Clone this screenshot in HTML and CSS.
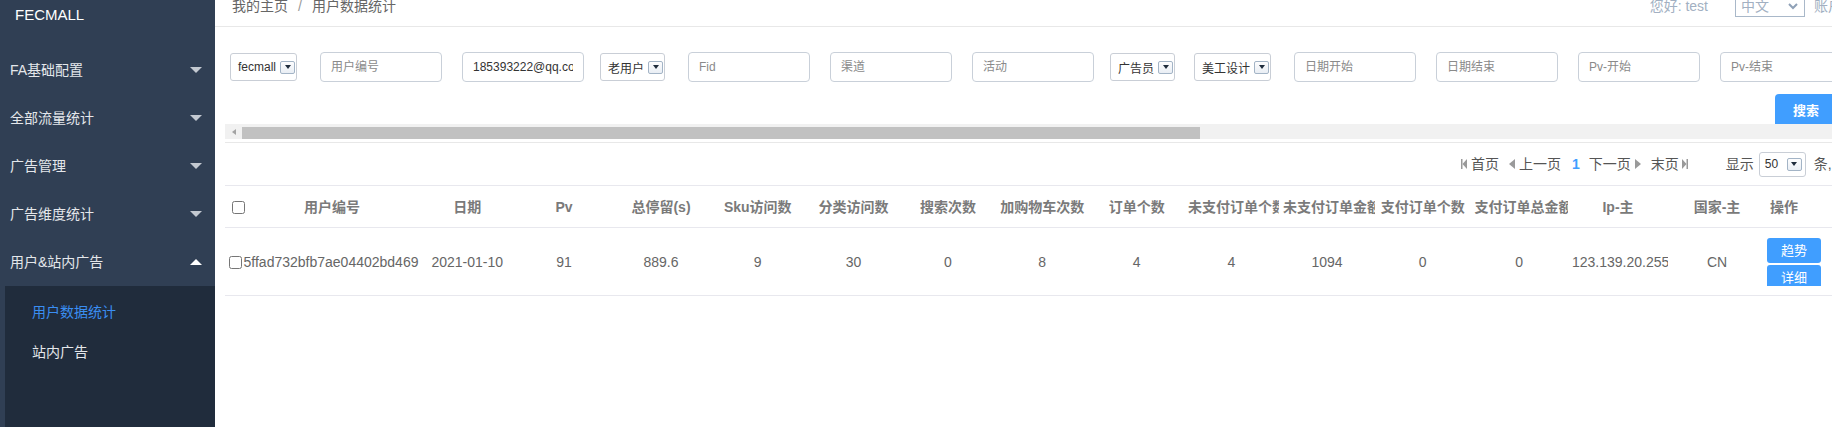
FILE: index.html
```html
<!DOCTYPE html>
<html lang="zh-CN">
<head>
<meta charset="utf-8">
<title>用户数据统计 - FECMALL</title>
<link rel="stylesheet" href="styles.css">
</head>
<body>
<div class="app">
  <aside class="sidebar">
    <div class="logo">FECMALL</div>
    <ul class="menu">
      <li class="menu-item"><span>FA基础配置</span><i class="caret"></i></li>
      <li class="menu-item"><span>全部流量统计</span><i class="caret"></i></li>
      <li class="menu-item"><span>广告管理</span><i class="caret"></i></li>
      <li class="menu-item"><span>广告维度统计</span><i class="caret"></i></li>
      <li class="menu-item"><span>用户&amp;站内广告</span><i class="caret caret-up"></i></li>
    </ul>
    <ul class="submenu">
      <li class="sub-item active">用户数据统计</li>
      <li class="sub-item">站内广告</li>
    </ul>
  </aside>

  <main class="main">
    <header class="topbar">
      <div class="crumbs">
        <span>我的主页</span><span class="crumb-sep">/</span><span>用户数据统计</span>
      </div>
      <div class="top-right">
        <span class="hello">您好: test</span>
        <div class="lang">
          <span>中文</span>
          <svg class="lang-chev" width="10" height="7" viewBox="0 0 10 7"><polyline points="1,1 5,5 9,1" fill="none" stroke="#8fa1b7" stroke-width="2"/></svg>
        </div>
        <span class="account">账户设置</span>
      </div>
    </header>

    <section class="filter">
      <div class="filter-row">
        <div class="sel"><span>fecmall</span><span class="sel-btn"></span></div>
        <input class="field" placeholder="用户编号">
        <input class="field" value="185393222@qq.com">
        <div class="sel"><span>老用户</span><span class="sel-btn"></span></div>
        <input class="field" placeholder="Fid">
        <input class="field" placeholder="渠道">
        <input class="field" placeholder="活动">
        <div class="sel"><span>广告员</span><span class="sel-btn"></span></div>
        <div class="sel"><span>美工设计</span><span class="sel-btn"></span></div>
        <input class="field" placeholder="日期开始">
        <input class="field" placeholder="日期结束">
        <input class="field" placeholder="Pv-开始">
        <input class="field" placeholder="Pv-结束">
      </div>
      <div class="search-row">
        <button class="btn-search">搜索</button>
      </div>
      <div class="hscroll">
        <span class="hscroll-arrow"></span>
        <span class="hscroll-thumb"></span>
      </div>
    </section>

    <div class="pager">
      <span class="pg">
        <svg width="6" height="10" viewBox="0 0 6 10"><rect x="0" y="0" width="1.5" height="10" fill="#9a9a9a"/><path d="M6 0 L1.5 5 L6 10 Z" fill="#9a9a9a"/></svg>
        <span>首页</span>
      </span>
      <span class="pg">
        <svg width="6" height="10" viewBox="0 0 6 10"><path d="M6 0 L0 5 L6 10 Z" fill="#9a9a9a"/></svg>
        <span>上一页</span>
      </span>
      <span class="pg-cur">1</span>
      <span class="pg">
        <span>下一页</span>
        <svg width="6" height="10" viewBox="0 0 6 10"><path d="M0 0 L6 5 L0 10 Z" fill="#9a9a9a"/></svg>
      </span>
      <span class="pg pg-last">
        <span>末页</span>
        <svg width="6" height="10" viewBox="0 0 6 10"><path d="M0 0 L4.5 5 L0 10 Z" fill="#9a9a9a"/><rect x="4.5" y="0" width="1.5" height="10" fill="#9a9a9a"/></svg>
      </span>
      <span class="pg-size">显示</span>
      <div class="sel sel-page"><span>50</span><span class="sel-btn"></span></div>
      <span class="pg-unit">条, 共1条</span>
    </div>

    <div class="table-wrap">
      <table class="grid">
        <colgroup>
          <col class="c-check">
          <col class="c-id">
          <col class="w965"><col class="w97"><col class="w97"><col class="w965">
          <col class="w95"><col class="w94"><col class="w945"><col class="w945">
          <col class="w95"><col class="w96"><col class="w955"><col class="w975">
          <col class="c-ip">
          <col class="c-country">
          <col class="c-ops">
        </colgroup>
        <thead>
          <tr>
            <th class="cell-check"><input type="checkbox" class="chk-head"></th>
            <th class="th-id">用户编号</th>
            <th>日期</th>
            <th>Pv</th>
            <th>总停留(s)</th>
            <th>Sku访问数</th>
            <th>分类访问数</th>
            <th>搜索次数</th>
            <th>加购物车次数</th>
            <th>订单个数</th>
            <th>未支付订单个数</th>
            <th>未支付订单金额</th>
            <th>支付订单个数</th>
            <th>支付订单总金额</th>
            <th>Ip-主</th>
            <th>国家-主</th>
            <th class="th-ops">操作</th>
          </tr>
        </thead>
        <tbody>
          <tr>
            <td class="cell-check"><input type="checkbox" class="chk-row"></td>
            <td class="td-id">5ffad732bfb7ae04402bd469</td>
            <td>2021-01-10</td>
            <td>91</td>
            <td>889.6</td>
            <td>9</td>
            <td>30</td>
            <td>0</td>
            <td>8</td>
            <td>4</td>
            <td>4</td>
            <td>1094</td>
            <td>0</td>
            <td>0</td>
            <td>123.139.20.255</td>
            <td>CN</td>
            <td class="td-ops">
              <div class="ops">
                <a class="btn-sm">趋势</a>
                <a class="btn-sm">详细</a>
              </div>
            </td>
          </tr>
        </tbody>
      </table>
    </div>
  </main>
</div>
</body>
</html>
```

FILE: styles.css
```css
* { box-sizing: border-box; }

html, body {
  margin: 0;
  padding: 0;
  overflow: hidden;
  background: #fff;
}

body {
  font-family: "Liberation Sans", Arial, "Noto Sans CJK SC", sans-serif;
  font-size: 14px;
  color: #666;
}

.app {
  display: flex;
  width: 1880px;
  height: 427px;
}

/* ---------- sidebar ---------- */
.sidebar {
  width: 215px;
  flex: none;
  background: #303f54;
  display: flex;
  flex-direction: column;
  color: #e4e7eb;
}

.logo {
  height: 46px;
  padding: 7px 0 0 15px;
  font-size: 15px;
  line-height: 16px;
  color: #fff;
}

.menu, .submenu {
  list-style: none;
  margin: 0;
  padding: 0;
}

.menu-item {
  height: 48px;
  display: flex;
  align-items: center;
  justify-content: space-between;
  padding: 0 13px 0 10px;
  font-size: 14px;
  line-height: 16px;
}

.caret {
  width: 0;
  height: 0;
  border-left: 6px solid transparent;
  border-right: 6px solid transparent;
  border-top: 6px solid #c3c9d1;
}

.caret-up {
  border-top: 0;
  border-bottom: 6px solid #fff;
}

.submenu {
  flex: 1;
  margin-left: 5px;
  padding-top: 6px;
  background: #202c3c;
}

.sub-item {
  height: 40px;
  line-height: 40px;
  padding-left: 27px;
  font-size: 14px;
  color: #e4e7eb;
}

.sub-item.active { color: #3a8ef2; }

/* ---------- main ---------- */
.main {
  flex: 1;
  min-width: 0;
}

.topbar {
  height: 27px;
  border-bottom: 1px solid #e8e8e8;
  padding: 0 10px 14px 17px;
  display: flex;
  align-items: center;
  justify-content: space-between;
  line-height: 12px;
}

.crumbs { color: #666; }
.crumb-sep { margin: 0 10px; color: #999; }

.top-right {
  display: flex;
  align-items: center;
  color: #a2b0c2;
}

.lang {
  width: 70px;
  height: 21px;
  margin-left: 27px;
  border: 1px solid #a9b8c9;
  display: flex;
  align-items: center;
  justify-content: space-between;
  padding: 0 6px 0 5px;
  color: #a2b0c2;
}

.account { margin-left: 9px; }

/* ---------- filter ---------- */
.filter {
  margin-left: 10px;
  padding-top: 25px;
  padding-bottom: 3px;
  border-bottom: 1px solid #e8e8e8;
}

.filter-row {
  display: flex;
  align-items: center;
  gap: 20px;
  padding-left: 9px;
  height: 30px;
}

.field {
  flex: none;
  width: 122px;
  height: 30px;
  border: 1px solid #c9d0d9;
  border-radius: 4px;
  padding: 0 10px;
  font-family: inherit;
  font-size: 12px;
  color: #333;
  background: #fff;
  outline: none;
}

.field::placeholder { color: #8a8a8a; }

.sel {
  flex: none;
  height: 28px;
  margin: 0 3px 0 -4px;
  border: 1px solid #c9ced6;
  border-radius: 3px;
  display: flex;
  align-items: center;
  gap: 4px;
  padding: 0 1px 0 7px;
  font-size: 12px;
  color: #333;
  background: #fff;
}

.sel-btn {
  width: 15px;
  height: 13px;
  border: 1px solid #a3b4c6;
  border-radius: 2px;
  background: linear-gradient(#fdfdfe, #e9eef4);
  display: flex;
  align-items: center;
  justify-content: center;
}

.sel-btn::after {
  content: "";
  width: 0;
  height: 0;
  border-left: 3.5px solid transparent;
  border-right: 3.5px solid transparent;
  border-top: 4px solid #1f2c3c;
}

.search-row {
  display: flex;
  justify-content: flex-end;
  margin-top: 12px;
  padding-right: 43px;
}

.btn-search {
  width: 62px;
  height: 30px;
  border: 0;
  border-radius: 4px 4px 0 0;
  background: #409eff;
  color: #fff;
  font-family: inherit;
  font-size: 13px;
  font-weight: bold;
  padding: 0;
}

.hscroll {
  height: 15px;
  background: #f1f1f1;
  display: flex;
  align-items: center;
  padding-left: 7px;
}

.hscroll-arrow {
  width: 0;
  height: 0;
  border-top: 3.5px solid transparent;
  border-bottom: 3.5px solid transparent;
  border-right: 4px solid #a3a3a3;
}

.hscroll-thumb {
  width: 958px;
  height: 12px;
  margin: 2px 0 0 6px;
  background: #c1c1c1;
}

/* ---------- pager ---------- */
.pager {
  height: 43px;
  margin-left: 10px;
  border-bottom: 1px solid #e8e8ee;
  display: flex;
  align-items: center;
  padding-left: 1236px;
  color: #555;
  line-height: 16px;
  white-space: nowrap;
}

.pg {
  display: flex;
  align-items: center;
  gap: 4px;
  margin-right: 10px;
}

.pg-last { gap: 3px; margin-right: 0; }

.pg-cur {
  color: #409eff;
  font-weight: bold;
  margin: 0 9px 0 1px;
}

.pg-size { margin-left: 38px; margin-right: 5px; }

.sel-page {
  width: 47px;
  height: 25px;
  margin: 0 8px 0 0;
  justify-content: space-between;
  padding: 0 3px 0 5px;
}

/* ---------- table ---------- */
.table-wrap { margin-left: 10px; }

.grid {
  width: 100%;
  table-layout: fixed;
  border-collapse: separate;
  border-spacing: 0;
}

.c-check { width: 18px; }
.c-id { width: 176px; }
.w94 { width: 94px; }
.w945 { width: 94.5px; }
.w95 { width: 95px; }
.w955 { width: 95.5px; }
.w96 { width: 96px; }
.w965 { width: 96.5px; }
.w97 { width: 97px; }
.w975 { width: 97.5px; }
.c-ip { width: 100px; }
.c-country { width: 98px; }

.grid th, .grid td {
  border-bottom: 1px solid #e8e8ee;
  padding: 0 4px;
  text-align: center;
  white-space: nowrap;
  overflow: hidden;
  line-height: 16px;
}

.grid thead tr { height: 42px; }
.grid tbody tr { height: 68px; }

.grid th {
  font-weight: bold;
  color: #7a7a7a;
}

.grid td { color: #666; }

.grid .cell-check {
  padding: 0;
  text-align: left;
  overflow: visible;
}

.chk-head { margin: 0 0 0 7px; vertical-align: middle; }
.chk-row { margin: 0 0 0 4px; vertical-align: middle; }

.grid .th-id { padding-left: 6px; }
.grid .td-id { padding: 0; }

.grid .th-ops { text-align: left; padding-left: 4px; }
.grid .td-ops { text-align: left; padding-left: 1px; }

.ops {
  display: flex;
  flex-direction: column;
  gap: 2px;
  height: 48px;
  overflow: hidden;
}

.btn-sm {
  flex: none;
  width: 54px;
  height: 25px;
  border-radius: 3px;
  background: #409eff;
  color: #fff;
  font-size: 13px;
  line-height: 25px;
  text-align: center;
}
```
